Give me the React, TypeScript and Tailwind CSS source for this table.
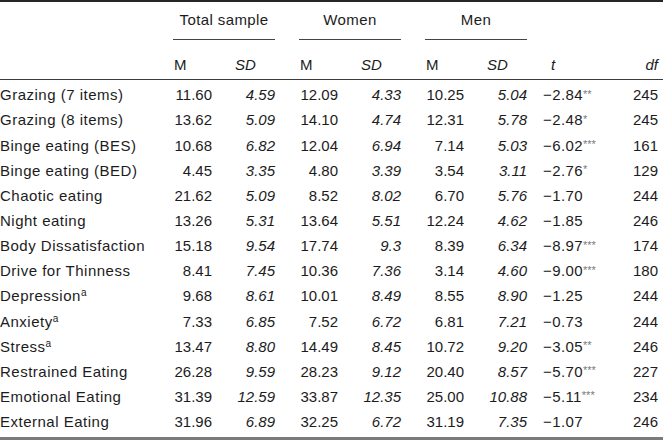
type Row = {
  label: string;
  sup?: string;
  v: [string, string, string, string, string, string];
  t: string;
  stars?: string;
  df: string;
};

const rows: Row[] = [
  { label: "Grazing (7 items)", v: ["11.60", "4.59", "12.09", "4.33", "10.25", "5.04"], t: "−2.84", stars: "**", df: "245" },
  { label: "Grazing (8 items)", v: ["13.62", "5.09", "14.10", "4.74", "12.31", "5.78"], t: "−2.48", stars: "*", df: "245" },
  { label: "Binge eating (BES)", v: ["10.68", "6.82", "12.04", "6.94", "7.14", "5.03"], t: "−6.02", stars: "***", df: "161" },
  { label: "Binge eating (BED)", v: ["4.45", "3.35", "4.80", "3.39", "3.54", "3.11"], t: "−2.76", stars: "*", df: "129" },
  { label: "Chaotic eating", v: ["21.62", "5.09", "8.52", "8.02", "6.70", "5.76"], t: "−1.70", df: "244" },
  { label: "Night eating", v: ["13.26", "5.31", "13.64", "5.51", "12.24", "4.62"], t: "−1.85", df: "246" },
  { label: "Body Dissatisfaction", v: ["15.18", "9.54", "17.74", "9.3", "8.39", "6.34"], t: "−8.97", stars: "***", df: "174" },
  { label: "Drive for Thinness", v: ["8.41", "7.45", "10.36", "7.36", "3.14", "4.60"], t: "−9.00", stars: "***", df: "180" },
  { label: "Depression", sup: "a", v: ["9.68", "8.61", "10.01", "8.49", "8.55", "8.90"], t: "−1.25", df: "244" },
  { label: "Anxiety", sup: "a", v: ["7.33", "6.85", "7.52", "6.72", "6.81", "7.21"], t: "−0.73", df: "244" },
  { label: "Stress", sup: "a", v: ["13.47", "8.80", "14.49", "8.45", "10.72", "9.20"], t: "−3.05", stars: "**", df: "246" },
  { label: "Restrained Eating", v: ["26.28", "9.59", "28.23", "9.12", "20.40", "8.57"], t: "−5.70", stars: "***", df: "227" },
  { label: "Emotional Eating", v: ["31.39", "12.59", "33.87", "12.35", "25.00", "10.88"], t: "−5.11", stars: "***", df: "234" },
  { label: "External Eating", v: ["31.96", "6.89", "32.25", "6.72", "31.19", "7.35"], t: "−1.07", df: "246" },
];

function Group({ m, sd }: { m: string; sd: string }) {
  return (
    <div className="flex w-[102px]">
      <span className="w-[39px] text-right">{m}</span>
      <span className="w-[63px] text-right italic">{sd}</span>
    </div>
  );
}

export default function App() {
  return (
    <div
      className="w-[663px] h-[440px] bg-white text-[15px] text-[#1c1c1c]"
      style={{ fontFamily: '"Liberation Sans", Arial, sans-serif' }}
    >
      <div className="border-t-2 border-[#262626] border-b-[3px] border-b-[#7b7b7b] flex flex-col h-[440px]">
        {/* group headings */}
        <div className="flex h-[38px] leading-[36px] tracking-[0.4px]">
          <div className="w-[173px]" />
          <div className="w-[102px] border-b border-[#444] text-center">Total sample</div>
          <div className="w-[24px]" />
          <div className="w-[102px] border-b border-[#444] text-center">Women</div>
          <div className="w-[24px]" />
          <div className="w-[102px] border-b border-[#444] text-center">Men</div>
        </div>

        {/* column headings */}
        <div className="flex h-[40px] pt-[15px] leading-[20px] border-b border-[#3a3a3a]">
          <div className="w-[173px]" />
          {[0, 1, 2].map((i) => (
            <div key={i} className="flex">
              {i > 0 && <div className="w-[24px]" />}
              <div className="flex w-[102px]">
                <span className="w-[39px] pl-[1px]">M</span>
                <span className="w-[63px] pl-[23px] italic">SD</span>
              </div>
            </div>
          ))}
          <div className="w-[86px] pl-[24px] italic">t</div>
          <div className="w-[45px] text-right italic">df</div>
        </div>

        {/* body */}
        <div className="flex flex-col pt-[2.3px]">
          {rows.map((r) => (
            <div key={r.label} className="flex h-[25.15px] leading-[25.15px]">
              <div className="w-[173px] tracking-[0.5px] whitespace-nowrap">
                {r.label}
                {r.sup && <span className="relative -top-[5px] text-[10px] tracking-normal">{r.sup}</span>}
              </div>
              <Group m={r.v[0]} sd={r.v[1]} />
              <div className="w-[24px]" />
              <Group m={r.v[2]} sd={r.v[3]} />
              <div className="w-[24px]" />
              <Group m={r.v[4]} sd={r.v[5]} />
              <div className="w-[86px] pl-[16px] tracking-[0.4px] whitespace-nowrap">
                {r.t}
                {r.stars && <span className="relative -top-[2.5px] text-[11px] text-[#7a7a7a] tracking-normal">{r.stars}</span>}
              </div>
              <div className="w-[45px] text-right">{r.df}</div>
            </div>
          ))}
        </div>
      </div>
    </div>
  );
}
